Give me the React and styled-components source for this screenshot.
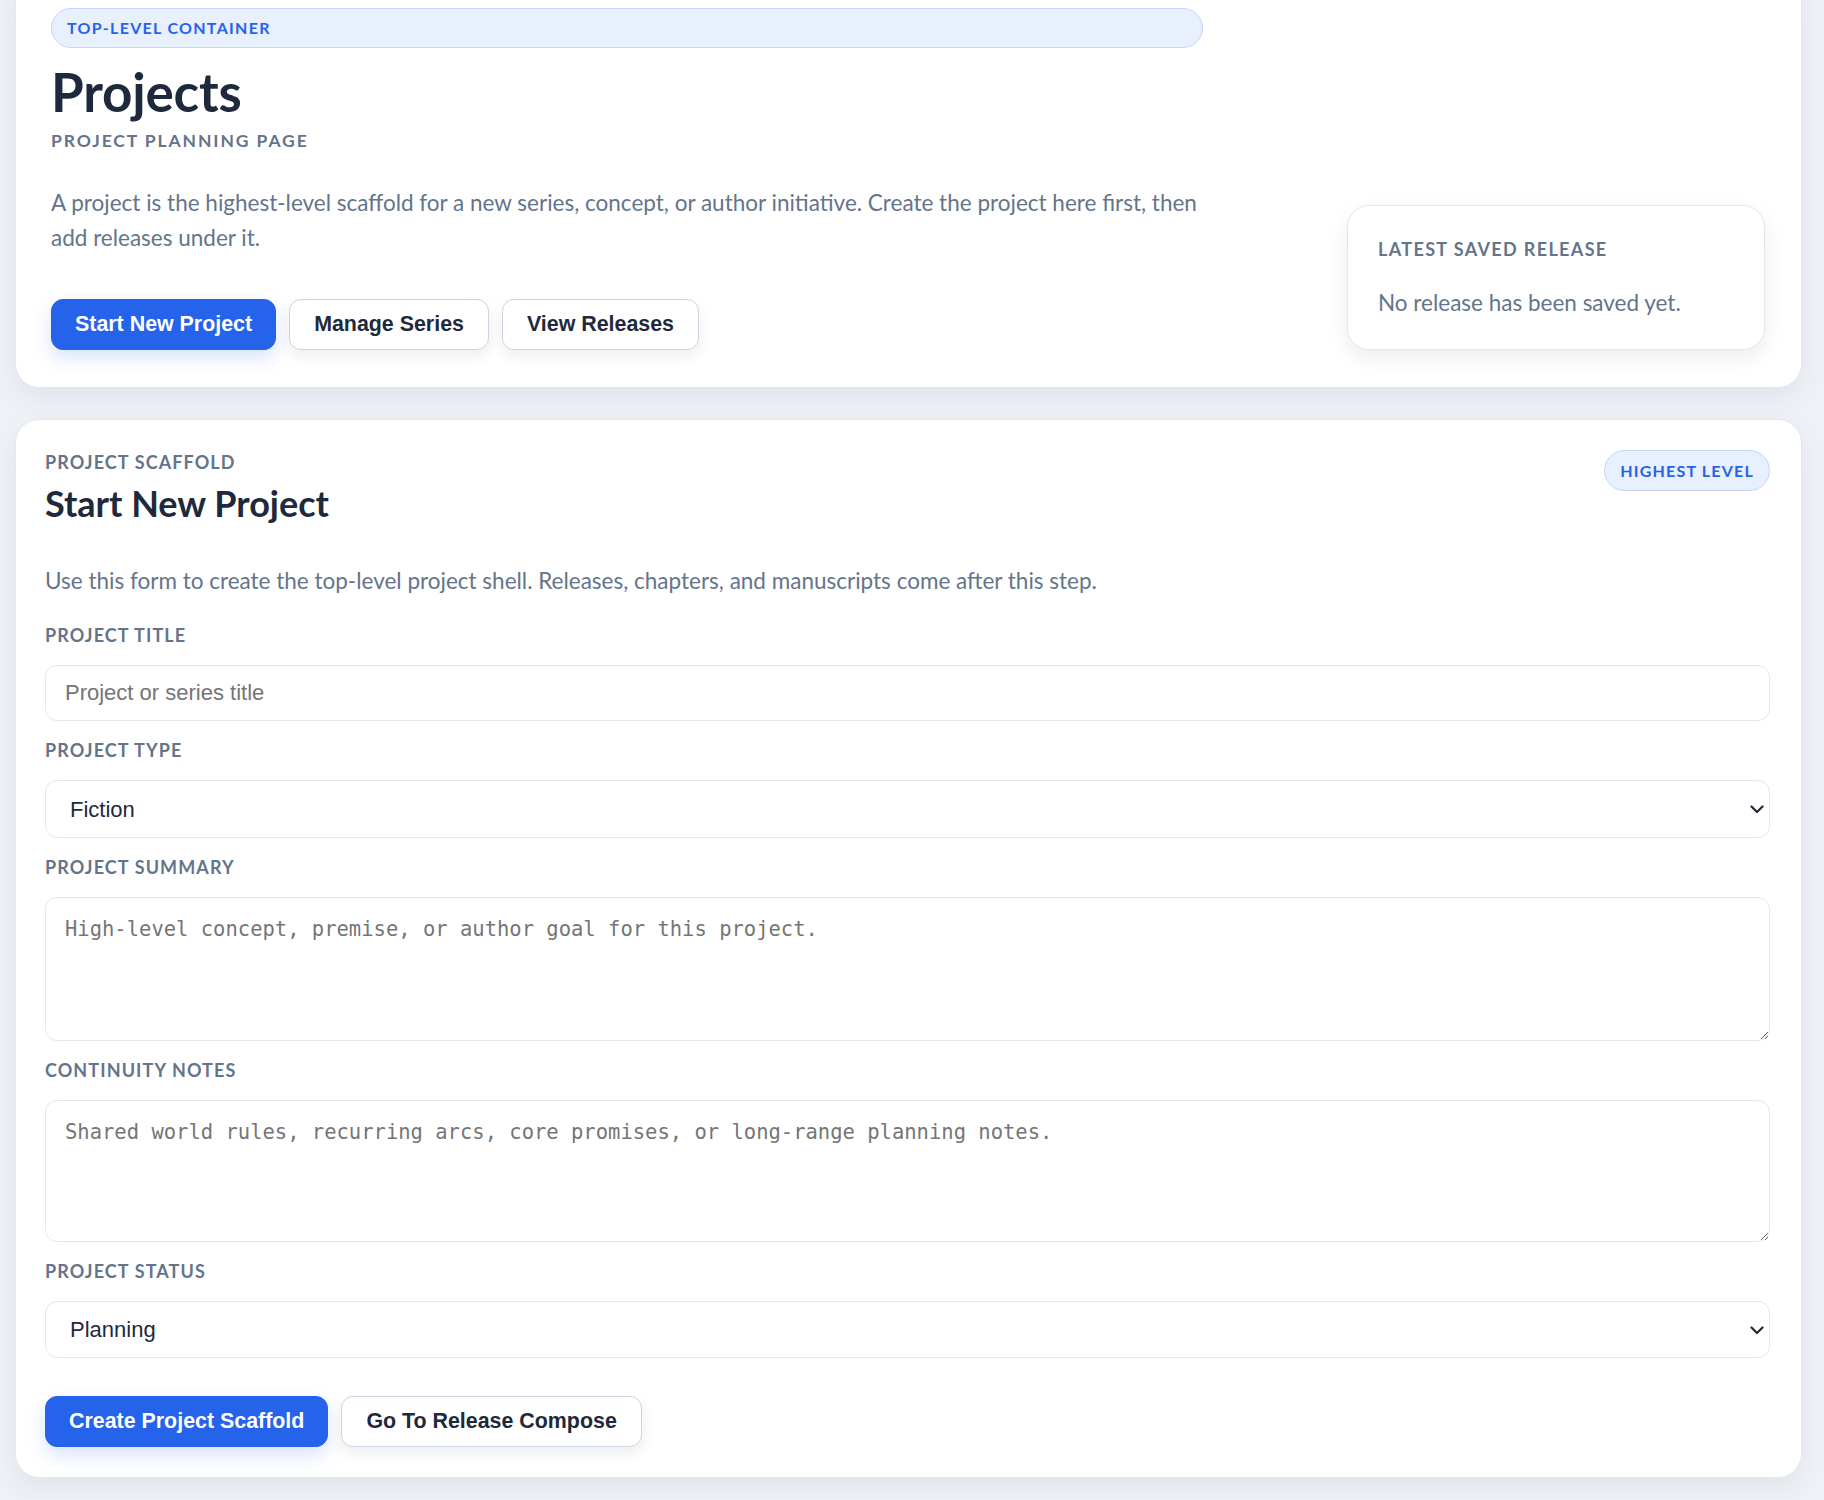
import React from 'react';
import styled, { createGlobalStyle } from 'styled-components';

const Global = createGlobalStyle`
  * { box-sizing: border-box; }
  body {
    margin: 0;
    background: #eef2f7;
    font-family: Lato, "Open Sans", sans-serif;
    color: #1e293b;
  }
`;

const Page = styled.main`
  display: flex;
  flex-direction: column;
  gap: 31px;
  margin: -28px 22px 0 15px;
  padding-bottom: 21px;
`;

const Card = styled.section`
  background: #fff;
  border: 1px solid #e2e8f0;
  border-radius: 24px;
  box-shadow: 0 10px 28px rgba(15, 23, 42, 0.06);
  padding: ${(p) => p.$pad};
`;

const HeroGrid = styled.div`
  display: grid;
  grid-template-columns: minmax(0, 1fr) 418px;
  column-gap: 144px;
  align-items: end;
`;

const HeroMain = styled.div`
  display: flex;
  flex-direction: column;
  align-items: stretch;
`;

const Pill = styled.div`
  height: 40px;
  padding: 0 15px;
  border: 1px solid #c5d5fb;
  border-radius: 999px;
  background: #e8effd;
  color: #2563eb;
  font-size: 16px;
  line-height: 38px;
  font-weight: 700;
  letter-spacing: 1.3px;
  text-transform: uppercase;
`;

const Badge = styled(Pill)`
  height: 41px;
  line-height: 39px;
  display: inline-block;
  letter-spacing: 1.2px;
`;

const Title = styled.h1`
  margin: 15px 0 0;
  font-size: 53px;
  line-height: 57px;
  font-weight: 700;
  letter-spacing: -0.2px;
  color: #1e293b;
`;

const Eyebrow = styled.div`
  font-size: ${(p) => p.$size || '18px'};
  line-height: 24px;
  font-weight: 700;
  letter-spacing: ${(p) => p.$ls || '1.1px'};
  text-transform: uppercase;
  color: #64748b;
  margin-top: ${(p) => p.$mt || '0'};
`;

const Lead = styled.p`
  margin: ${(p) => p.$m || '0'};
  font-size: 22.5px;
  line-height: 35px;
  color: #64748b;
`;

const ButtonRow = styled.div`
  display: flex;
  gap: 13px;
  margin-top: ${(p) => p.$mt || '0'};
`;

const Button = styled.button`
  height: 51px;
  padding: 0 ${(p) => (p.$primary ? '23px' : '24px')};
  border-radius: 12px;
  font-family: "Liberation Sans", Arial, sans-serif;
  font-size: 21.4px;
  font-weight: 700;
  cursor: pointer;
  border: 1px solid ${(p) => (p.$primary ? '#2563eb' : '#cbd5e1')};
  background: ${(p) => (p.$primary ? '#2563eb' : '#fff')};
  color: ${(p) => (p.$primary ? '#fff' : '#1e293b')};
  box-shadow: ${(p) =>
    p.$primary ? '0 8px 18px rgba(37, 99, 235, 0.18)' : '0 6px 14px rgba(15, 23, 42, 0.08)'};
`;

const Aside = styled.aside`
  border: 1px solid #e2e8f0;
  border-radius: 22px;
  background: #fff;
  padding: 31px 30px 29px;
  box-shadow: 0 8px 20px rgba(15, 23, 42, 0.08);
`;

const Header = styled.div`
  display: flex;
  justify-content: space-between;
  align-items: flex-start;
`;

const SectionTitle = styled.h2`
  margin: 8px 0 0;
  font-size: 36px;
  line-height: 43px;
  font-weight: 700;
  color: #1e293b;
`;

const Form = styled.form`
  display: flex;
  flex-direction: column;
  gap: 17px;
  margin-top: 25px;
`;

const Field = styled.label`
  display: flex;
  flex-direction: column;
  gap: 18px;
`;

const controlBase = `
  width: 100%;
  border: 1px solid #e2e8f0;
  border-radius: 12px;
  background: #fff;
  color: #1e293b;
  outline: none;
`;

const Input = styled.input`
  ${controlBase}
  height: 56px;
  padding: 0 19px;
  font-family: "Liberation Sans", Arial, sans-serif;
  font-size: 22px;
  &::placeholder { color: #757575; }
`;

const SelectWrap = styled.div`
  position: relative;
  display: flex;
`;

const Select = styled.select`
  ${controlBase}
  appearance: none;
  height: ${(p) => p.$h || '57px'};
  padding: 0 40px 0 24px;
  font-family: "Liberation Sans", Arial, sans-serif;
  font-size: 22px;
`;

const Chevron = styled.svg`
  position: absolute;
  right: 6px;
  top: 50%;
  width: 14px;
  height: 9px;
  margin-top: -4px;
  pointer-events: none;
  color: #1f2937;
`;

const TextArea = styled.textarea`
  ${controlBase}
  height: ${(p) => p.$h || '144px'};
  padding: 16px 19px;
  font-family: "DejaVu Sans Mono", "Liberation Mono", monospace;
  font-size: 20.5px;
  line-height: 1.5;
  resize: vertical;
  &::placeholder { color: #757575; }
`;

function DropDown({ height, value, options }) {
  return (
    <SelectWrap>
      <Select $h={height} defaultValue={value}>
        {options.map((o) => (
          <option key={o}>{o}</option>
        ))}
      </Select>
      <Chevron viewBox="0 0 14 9" fill="none">
        <path d="M1.5 1.5L7 7l5.5-5.5" stroke="currentColor" strokeWidth="2.2" strokeLinecap="round" strokeLinejoin="round" />
      </Chevron>
    </SelectWrap>
  );
}

export default function App() {
  return (
    <>
      <Global />
      <Page>
        <Card $pad="35px 36px 37px 35px">
          <HeroGrid>
            <HeroMain>
              <Pill>Top-level container</Pill>
              <Title>Projects</Title>
              <Eyebrow $size="17.5px" $ls="1.9px" $mt="9px">Project planning page</Eyebrow>
              <Lead $m="32px 0 0">
                A project is the highest-level scaffold for a new series, concept, or author initiative. Create the project here first, then add releases under it.
              </Lead>
              <ButtonRow $mt="44px">
                <Button $primary type="button">Start New Project</Button>
                <Button type="button">Manage Series</Button>
                <Button type="button">View Releases</Button>
              </ButtonRow>
            </HeroMain>
            <Aside>
              <Eyebrow $ls="1.35px">Latest saved release</Eyebrow>
              <Lead $m="24px 0 0">No release has been saved yet.</Lead>
            </Aside>
          </HeroGrid>
        </Card>

        <Card $pad="30px 31px 30px 29px">
          <Header>
            <div>
              <Eyebrow>Project scaffold</Eyebrow>
              <SectionTitle>Start New Project</SectionTitle>
            </div>
            <Badge>Highest level</Badge>
          </Header>
          <Lead $m="38px 0 0">
            Use this form to create the top-level project shell. Releases, chapters, and manuscripts come after this step.
          </Lead>
          <Form onSubmit={(e) => e.preventDefault()}>
            <Field>
              <Eyebrow>Project title</Eyebrow>
              <Input placeholder="Project or series title" />
            </Field>
            <Field>
              <Eyebrow>Project type</Eyebrow>
              <DropDown height="58px" value="Fiction" options={['Fiction', 'Nonfiction', 'Poetry']} />
            </Field>
            <Field>
              <Eyebrow>Project summary</Eyebrow>
              <TextArea placeholder="High-level concept, premise, or author goal for this project." />
            </Field>
            <Field>
              <Eyebrow>Continuity notes</Eyebrow>
              <TextArea $h="142px" placeholder="Shared world rules, recurring arcs, core promises, or long-range planning notes." />
            </Field>
            <Field>
              <Eyebrow>Project status</Eyebrow>
              <DropDown value="Planning" options={['Planning', 'Drafting', 'Published']} />
            </Field>
            <ButtonRow $mt="21px">
              <Button $primary type="submit">Create Project Scaffold</Button>
              <Button type="button">Go To Release Compose</Button>
            </ButtonRow>
          </Form>
        </Card>
      </Page>
    </>
  );
}
